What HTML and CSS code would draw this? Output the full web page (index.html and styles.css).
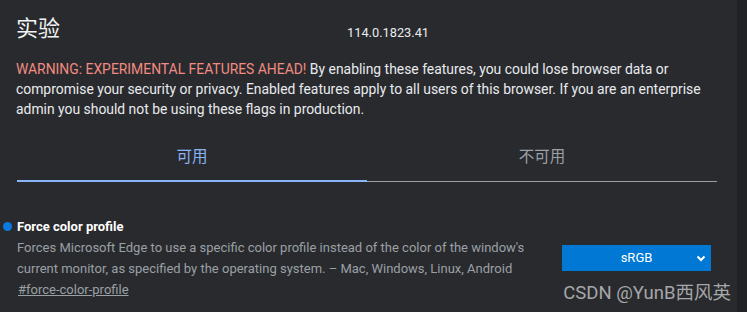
FILE: index.html
```html
<!DOCTYPE html>
<html lang="zh-CN">
<head>
    <meta charset="utf-8">
    <title>实验</title>
    <link rel="stylesheet" href="styles.css">
</head>
<body>
    <div class="page">
        <main class="content">
            <!-- Header -->
            <div class="header">
                <h1>实验</h1>
                <span class="version">114.0.1823.41</span>
            </div>

            <p class="warning">
                <span class="warning-red">WARNING: EXPERIMENTAL FEATURES AHEAD!</span>
                By enabling these features, you could lose browser data or compromise your security or privacy. Enabled features apply to all users of this browser. If you are an enterprise admin you should not be using these flags in production.
            </p>

            <!-- Tabs -->
            <div class="tabs">
                <div class="tab active">可用</div>
                <div class="tab">不可用</div>
            </div>

            <!-- Flag -->
            <div class="flag">
                <div class="flag-info">
                    <div class="flag-name"><span class="dot"></span>Force color profile</div>
                    <p class="flag-desc">Forces Microsoft Edge to use a specific color profile instead of the color of the window's current monitor, as specified by the operating system. – Mac, Windows, Linux, Android</p>
                    <a class="flag-link" href="#force-color-profile">#force-color-profile</a>
                </div>
                <div class="flag-control">
                    <div class="select">
                        <span>sRGB</span>
                        <svg class="chevron" width="10" height="7" viewBox="0 0 10 7">
                            <path d="M1.5 1.5 L5 5 L8.5 1.5" fill="none" stroke="#fff" stroke-width="2"/>
                        </svg>
                    </div>
                </div>
            </div>
        </main>
        <div class="scrollbar"></div>
        <div class="watermark">CSDN @YunB西风英</div>
    </div>
</body>
</html>
```

FILE: styles.css
```css
body {
    margin: 0;
    background-color: #292a2d;
    color: #e8eaed;
    font-family: Roboto, "Noto Sans CJK SC", sans-serif;
    overflow: hidden;
}

.page {
    position: relative;
    display: flex;
    height: 312px;
}

.content {
    flex: 1;
    min-width: 0;
    padding: 0 20px 0 16px;
}

.scrollbar {
    width: 10px;
    background: #212225;
}

/* Header */
.header {
    display: flex;
    align-items: flex-end;
    padding-top: 16px;
    height: 26px;
}

.header h1 {
    margin: 0;
    font-size: 22px;
    font-weight: 400;
    line-height: 26px;
    color: #f1f3f4;
}

.version {
    margin-left: 287px;
    font-size: 12.8px;
    line-height: 18px;
    color: #e8eaed;
}

.warning {
    margin: 17px 0 0;
    font-size: 13.9px;
    line-height: 20px;
    color: #e8eaed;
}

.warning-red {
    color: #f28b82;
}

/* Tabs */
.tabs {
    display: flex;
    margin: 27px 0 0 1px;
}

.tab {
    flex: 1;
    text-align: center;
    font-size: 15.5px;
    line-height: 22px;
    padding-bottom: 13px;
    color: #9aa0a6;
    border-bottom: 1px solid #9aa0a6;
}

.tab.active {
    color: #8ab4f8;
    border-bottom: 2px solid #8ab4f8;
    padding-bottom: 12px;
}

/* Flag */
.flag {
    display: flex;
    margin-top: 36px;
    margin-left: 1px;
}

.flag-info {
    width: 530px;
}

.flag-name {
    position: relative;
    font-size: 13px;
    font-weight: 700;
    line-height: 17px;
    color: #ffffff;
}

.dot {
    position: absolute;
    left: -14px;
    top: 4px;
    width: 9px;
    height: 9px;
    border-radius: 50%;
    background: #0a7ae0;
}

.flag-desc {
    margin: 2px 0 0;
    font-size: 13px;
    line-height: 21px;
    color: #9aa0a6;
}

.flag-link {
    display: inline-block;
    margin: -1px 0 0 1px;
    font-size: 13px;
    line-height: 18px;
    color: #9aa0a6;
    text-decoration: underline;
}

.flag-control {
    padding-top: 27px;
    margin-left: 15px;
}

.select {
    position: relative;
    width: 149px;
    height: 26px;
    background: #0078d4;
    color: #fff;
    font-size: 13px;
    line-height: 26px;
    text-align: center;
}

.chevron {
    position: absolute;
    right: 5px;
    top: 10px;
}

/* Watermark over the page */
.watermark {
    position: absolute;
    right: 16px;
    bottom: 8px;
    font-size: 18.5px;
    line-height: 22px;
    color: #a5a7aa;
    white-space: nowrap;
}
```
